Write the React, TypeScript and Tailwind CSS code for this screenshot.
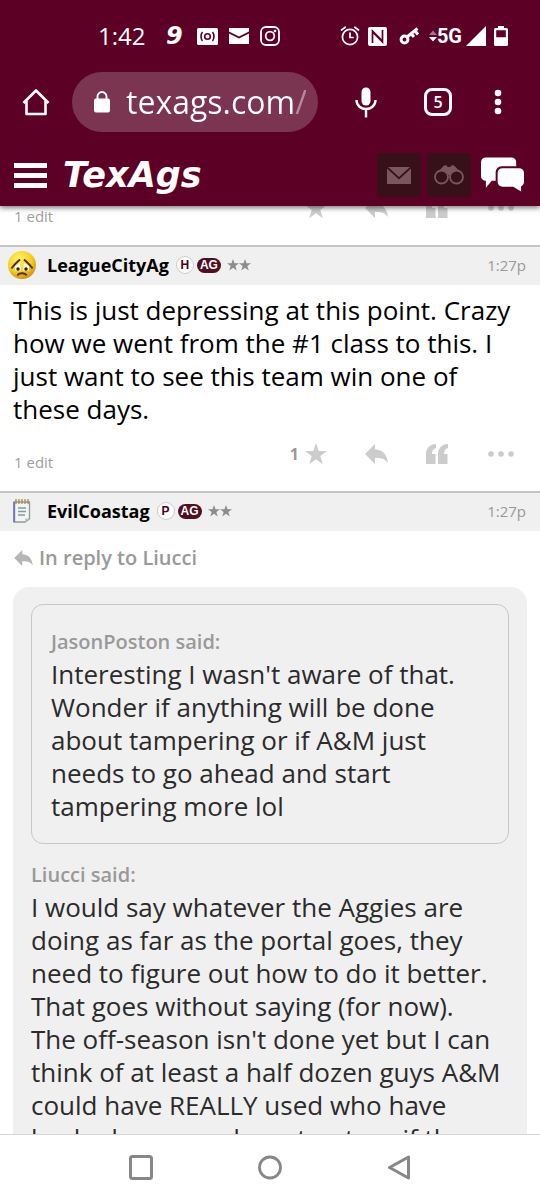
import type { ReactNode } from "react";

type Size = { w: number; h: number; box: string; className?: string; children: ReactNode };

const Svg = ({ w, h, box, className, children }: Size) => (
  <svg width={w} height={h} viewBox={box} className={className} fill="currentColor" aria-hidden="true">
    {children}
  </svg>
)

const Star = ({ size }: { size: number }) => (
  <Svg w={size} h={size} box="0 0 22 22">
    <path d="M11 0l2.7 7.9H22l-6.7 5 2.5 8.3L11 16.2l-6.8 5 2.5-8.3L0 7.9h8.3z" />
  </Svg>
)

const Reply = ({ w, h }: { w: number; h: number }) => (
  <Svg w={w} h={h} box="0 0 22 19">
    <path d="M0 9.500L9.500 0v5C17 5.500 21 10 22 18c-3-4-6.500-5-12.500-4.700V19z" />
  </Svg>
)

const StatusBar = () => (
  <div className="flex h-[72px] items-center pr-8 pl-[98px]">
    <span className="w-[68px] font-['Open_Sans',sans-serif] text-2xl">1:42</span>
    <div className="flex items-center gap-[11px]">
      <span className="w-5 font-['DejaVu_Sans',sans-serif] text-2xl leading-6 font-bold italic">9</span>
      <Svg w={21} h={17} box="0 0 21 17">
        <rect width="21" height="17" rx="1.500" />
        <g fill="none" stroke="#5d0025" strokeWidth="1.600">
          <circle cx="10.500" cy="8.500" r="2.800" />
          <path d="M5.500 4c-2 2.500-2 6.500 0 9M15.500 4c2 2.500 2 6.500 0 9" />
        </g>
      </Svg>
      <Svg w={20} h={16} box="0 0 20 16">
        <path d="M0 0h20v3.500L10 8.500 0 3.500zM0 5.500l10 5 10-5V16H0z" />
      </Svg>
      <Svg w={20} h={20} box="0 0 20 20">
        <g fill="none" stroke="currentColor" strokeWidth="1.800">
          <rect x="1" y="1" width="18" height="18" rx="5" />
          <circle cx="10" cy="10" r="4.300" />
        </g>
        <circle cx="15" cy="5" r="1.300" />
      </Svg>
    </div>
    <div className="ml-auto flex items-center gap-2">
      <Svg w={20} h={20} box="0 0 20 20">
        <g fill="none" stroke="currentColor" strokeWidth="1.700" strokeLinecap="round">
          <circle cx="10" cy="11" r="7.600" />
          <path d="M1.500 4l3.700-2.800M18.500 4l-3.700-2.800M10 7v4.500h3" />
        </g>
      </Svg>
      <Svg w={19} h={19} box="0 0 19 19">
        <rect width="19" height="19" rx="2" />
        <path d="M4.500 16V4l9.500 9.500M14.500 3v12L5 5.500" fill="none" stroke="#5d0025" strokeWidth="1.700" />
      </Svg>
      <Svg w={22} h={20} box="0 0 22 20" className="ml-1">
        <circle cx="5.500" cy="13.500" r="3.400" fill="none" stroke="currentColor" strokeWidth="3" />
        <path d="M8 11L18.500 2.500M12.500 8l2.500 3M16 5l3 3.500" fill="none" stroke="currentColor" strokeWidth="3" />
      </Svg>
      <div className="flex items-center">
        <Svg w={8} h={12} box="0 0 8 12">
          <path d="M0 5l4-4.500L8 5z" opacity="0.450" />
          <path d="M0 7h8l-4 4.500z" />
        </Svg>
        <span className="font-[Roboto,sans-serif] text-xl leading-5 font-bold">5G</span>
        <Svg w={20} h={20} box="0 0 20 20" className="ml-1">
          <path d="M20 0v20H0z" />
        </Svg>
      </div>
      <Svg w={14} h={20} box="0 0 14 20">
        <path d="M4 0h6v2h2.500A1.500 1.500 0 0 1 14 3.500v15a1.500 1.500 0 0 1-1.500 1.500h-11A1.500 1.500 0 0 1 0 18.500v-15A1.500 1.500 0 0 1 1.500 2H4zM2.200 4.200v7h9.600v-7z" fillRule="evenodd" />
      </Svg>
    </div>
  </div>
)

const AddressBar = () => (
  <div className="flex h-[60px] items-center pr-7 pl-[22px]">
    <button aria-label="Home">
      <Svg w={28} h={28} box="0 0 28 28">
        <path d="M1.500 15L14 2.500 26.500 15M4.500 13v13h19V13" fill="none" stroke="currentColor" strokeWidth="2.600" strokeLinejoin="round" />
      </Svg>
    </button>
    <div className="ml-[22px] flex h-[60px] min-w-0 flex-1 items-center rounded-full bg-[#7c3550] pr-3 pl-[22px]">
      <Svg w={16} h={22} box="0 0 16 22" className="shrink-0">
        <path d="M3.500 8V5.500a4.500 4.500 0 0 1 9 0V8" fill="none" stroke="currentColor" strokeWidth="1.900" />
        <rect y="7.500" width="16" height="14" rx="2" />
      </Svg>
      <input
        aria-label="Address"
        defaultValue="texags.com/"
        className="ml-4 w-full min-w-0 bg-linear-to-r from-white from-94% to-[#b48a9b] to-94% bg-clip-text font-['Open_Sans',sans-serif] text-[32px] text-transparent outline-none"
      />
    </div>
    <button aria-label="Voice search" className="ml-9">
      <Svg w={24} h={31} box="0 0 24 31">
        <rect x="7.500" y="0.500" width="9" height="18" rx="4.500" />
        <path d="M2.500 13c0 12 19 12 19 0M12 22v8.500" fill="none" stroke="currentColor" strokeWidth="2.400" />
      </Svg>
    </button>
    <button aria-label="Tabs" className="ml-[46px] flex size-7 items-center justify-center rounded-lg border-3 font-['Open_Sans',sans-serif] text-base leading-4 font-semibold">
      5
    </button>
    <button aria-label="Menu" className="ml-8 flex w-7 justify-center">
      <Svg w={8} h={26} box="0 0 8 26">
        <circle cx="4" cy="4" r="3.300" />
        <circle cx="4" cy="13" r="3.300" />
        <circle cx="4" cy="22" r="3.300" />
      </Svg>
    </button>
  </div>
)

const SiteHeader = () => (
  <div className="mt-3 flex h-[62px] items-center pr-4 pl-[14px]">
    <button aria-label="Navigation" className="flex w-[33px] flex-col gap-[5px]">
      <span className="h-[5px] bg-white"></span>
      <span className="h-[5px] bg-white"></span>
      <span className="h-[5px] bg-white"></span>
    </button>
    <a href="#" className="ml-4 font-['DejaVu_Sans',sans-serif] text-[35px] leading-10 font-bold italic">TexAgs</a>
    <div className="ml-auto flex items-center gap-[6px]">
      <button aria-label="Mail" className="flex size-11 items-center justify-center rounded-xs bg-[#38101a] text-[#7a5660]">
        <Svg w={24} h={17} box="0 0 24 17">
          <path d="M1 0h22L12 10zM0 1.500L12 12.500l12-11V17H0z" />
        </Svg>
      </button>
      <button aria-label="Watched topics" className="flex size-11 items-center justify-center rounded-xs bg-[#38101a] text-[#7a5660]">
        <Svg w={30} h={20} box="0 0 30 20">
          <path d="M3 8L9 1.500c2-2 4-1.500 4.500.500h3C17 0 19-.500 21 1.500L27 8l-9 3-1.500-1h-3L12 11z" />
          <g fill="#38101a" stroke="currentColor" strokeWidth="1.800">
            <circle cx="7.500" cy="12" r="6.500" />
            <circle cx="22.500" cy="12" r="6.500" />
          </g>
        </Svg>
      </button>
      <button aria-label="Forums" className="ml-1">
        <Svg w={43} h={36} box="0 0 44 36">
          <path d="M5 0h26a5 5 0 0 1 5 5v4H21a6 6 0 0 0-6 6v9h-4l-6 7V24a5 5 0 0 1-5-5V5a5 5 0 0 1 5-5z" />
          <path d="M22 11h17a5 5 0 0 1 5 5v9a5 5 0 0 1-3 4.500V35l-8-5H22a5 5 0 0 1-5-5v-9a5 5 0 0 1 5-5z" />
        </Svg>
      </button>
    </div>
  </div>
)

const PostActions = ({ likes, className = "" }: { likes?: number; className?: string }) => (
  <footer className={"flex h-[61px] items-start justify-between pr-[26px] pl-[14px] " + className}>
    <span className="pt-[22px] text-[15px] leading-5 text-[#a0a0a0]">1 edit</span>
    <div className="flex h-12 items-center text-[#cccccc]">
      <button aria-label="Like" className="flex items-center gap-[6px] text-base font-bold text-[#999999]">
        {likes}
        <span className="text-[#cccccc]"><Star size={22} /></span>
      </button>
      <button aria-label="Reply" className="ml-[38px]"><Reply w={23} h={20} /></button>
      <button aria-label="Quote" className="ml-[38px]">
        <Svg w={22} h={20} box="0 0 22 20">
          <path d="M10 0v4C7.500 4.500 6 7 6 10h3.500v10H0V10C0 4.500 4 0 10 0z" />
          <path d="M22 0v4c-2.500.500-4 3-4 6h3.500v10H12V10c0-5.500 4-10 10-10z" />
        </Svg>
      </button>
      <button aria-label="More" className="ml-10">
        <Svg w={26} h={6} box="0 0 26 6">
          <circle cx="3" cy="3" r="2.800" />
          <circle cx="13" cy="3" r="2.800" />
          <circle cx="23" cy="3" r="2.800" />
        </Svg>
      </button>
    </div>
  </footer>
)

const PostHeader = ({ name, badge, avatar }: { name: string; badge: string; avatar: ReactNode }) => (
  <header className="flex h-10 items-center border-t-2 border-[#c4c4c4] bg-[#f0f0f0] pr-[14px] pb-[2px] pl-[7px]">
    <div className="flex w-10 shrink-0">{avatar}</div>
    <a href="#" className="text-lg leading-6 font-bold text-black">{name}</a>
    <span className="ml-[7px] flex size-[18px] items-center justify-center rounded-full border border-[#cccccc] bg-white font-['Liberation_Sans',sans-serif] text-xs leading-3 font-bold text-[#500014]">
      {badge}
    </span>
    <span className="ml-[3px] flex h-[15px] w-6 items-center justify-center rounded-full bg-[#500f1e] font-['Liberation_Sans',sans-serif] text-xs leading-3 font-bold text-white">
      AG
    </span>
    <span className="ml-[6px] flex text-[#8c8c8c]">
      <Star size={12} />
      <Star size={12} />
    </span>
    <time className="ml-auto text-[15px] text-[#999999]">1:27p</time>
  </header>
)

const SadFace = () => (
  <Svg w={30} h={30} box="0 0 30 30">
    <defs>
      <radialGradient id="face" cx="0.400" cy="0.300" r="0.750">
        <stop offset="0" stopColor="#fff36a" />
        <stop offset="0.600" stopColor="#f5ce20" />
        <stop offset="1" stopColor="#c98d08" />
      </radialGradient>
    </defs>
    <circle cx="15" cy="15" r="14" fill="url(#face)" />
    <path d="M8 16l5-3 1 7.500H8zM22 16l-5-3-1 7.500h6z" fill="#ffffff" />
    <path d="M4.500 18.500c2-3 4.500-5.500 8.500-9M25.500 18.500c-2-3-4.500-5.500-8.500-9M10.500 25.500c1-3 8-3 9 0" fill="none" stroke="#5c2c08" strokeWidth="2" />
    <circle cx="11" cy="19" r="1.700" fill="#3a1a05" />
    <circle cx="19" cy="19" r="1.700" fill="#3a1a05" />
  </Svg>
)

const Notepad = () => (
  <Svg w={18} h={24} box="0 0 18 24" className="ml-[6px]">
    <path d="M1 3h15.500v17L12 23H1z" fill="#f4f5ee" stroke="#8f989b" strokeWidth="1.300" />
    <path d="M1.200 3v20" stroke="#7777bb" strokeWidth="2" />
    <path d="M12 23v-3.500h4.500z" fill="#b9c6c9" />
    <path d="M5 9h8M5 12.500h8M5 16h7" stroke="#7c9aa8" strokeWidth="1.300" />
    <path d="M3 0v5M6 0v5M9 0v5M12 0v5M15 0v5" stroke="#a98a4a" strokeWidth="1.300" />
  </Svg>
)

const NavBar = () => (
  <nav className="flex h-[66px] shrink-0 items-center justify-center gap-[105px] border-t border-[#d6d6d6] bg-white text-[#878787]">
    <button aria-label="Recent apps">
      <Svg w={24} h={25} box="0 0 24 25">
        <rect x="1.500" y="1.500" width="21" height="22" rx="2" fill="none" stroke="currentColor" strokeWidth="3" />
      </Svg>
    </button>
    <button aria-label="Home screen">
      <Svg w={24} h={25} box="0 0 24 25">
        <circle cx="12" cy="12.500" r="10.500" fill="none" stroke="currentColor" strokeWidth="2.800" />
      </Svg>
    </button>
    <button aria-label="Back">
      <Svg w={24} h={25} box="0 0 24 25">
        <path d="M21.500 2v21L2.500 12.500z" fill="none" stroke="currentColor" strokeWidth="3" strokeLinejoin="round" />
      </Svg>
    </button>
  </nav>
)

const App = () => {
  return (
    <div className="flex h-screen flex-col overflow-hidden bg-white font-['Open_Sans',sans-serif]">
      <div className="relative z-10 shrink-0 bg-[#5d0025] text-white shadow-[0_2px_5px_rgba(0,0,0,0.5)]">
        <StatusBar />
        <AddressBar />
        <SiteHeader />
      </div>

      <main className="min-h-0 flex-1 overflow-hidden">
        <PostActions className="-mt-[22px]" />

        <article>
          <PostHeader name="LeagueCityAg" badge="H" avatar={<SadFace />} />
          <p className="px-[13px] pt-[9px] pb-1 text-[26px] leading-[33px] text-black">
            This is just depressing at this point. Crazy how we went from the #1 class to this. I just want to see this team win one of<br />
            these days.
          </p>
          <PostActions likes={1} />
        </article>

        <article>
          <PostHeader name="EvilCoastag" badge="P" avatar={<Notepad />} />
          <a href="#" className="mx-[14px] mt-3 flex h-[30px] items-center gap-[6px] text-xl font-semibold text-[#999999]">
            <span className="text-[#b5b5b5]"><Reply w={19} h={16} /></span>
            In reply to Liucci
          </a>
          <div className="mx-[13px] mt-[14px] rounded-t-2xl bg-[#f0f0f0] px-[18px] pt-[17px] text-[26px] leading-[33px] text-[#2b2b2b]">
            <blockquote className="rounded-xl border border-[#c8c8c8] px-[19px] pt-[21px] pb-5">
              <p className="text-xl leading-8 font-semibold text-[#999999]">JasonPoston said:</p>
              <p>Interesting I wasn't aware of that. Wonder if anything will be done about tampering or if A&amp;M just needs to go ahead and start tampering more lol</p>
            </blockquote>
            <p className="mt-[15px] text-xl leading-8 font-semibold text-[#999999]">Liucci said:</p>
            <p>
              I would say whatever the Aggies are doing as far as the portal goes, they need to figure out how to do it better. That goes without saying (for now).<br />
              The off-season isn't done yet but I can think of at least a half dozen guys A&amp;M could have REALLY used who have backed away and went out, so if they
            </p>
          </div>
        </article>
      </main>

      <NavBar />
    </div>
  )
}

export default App;
